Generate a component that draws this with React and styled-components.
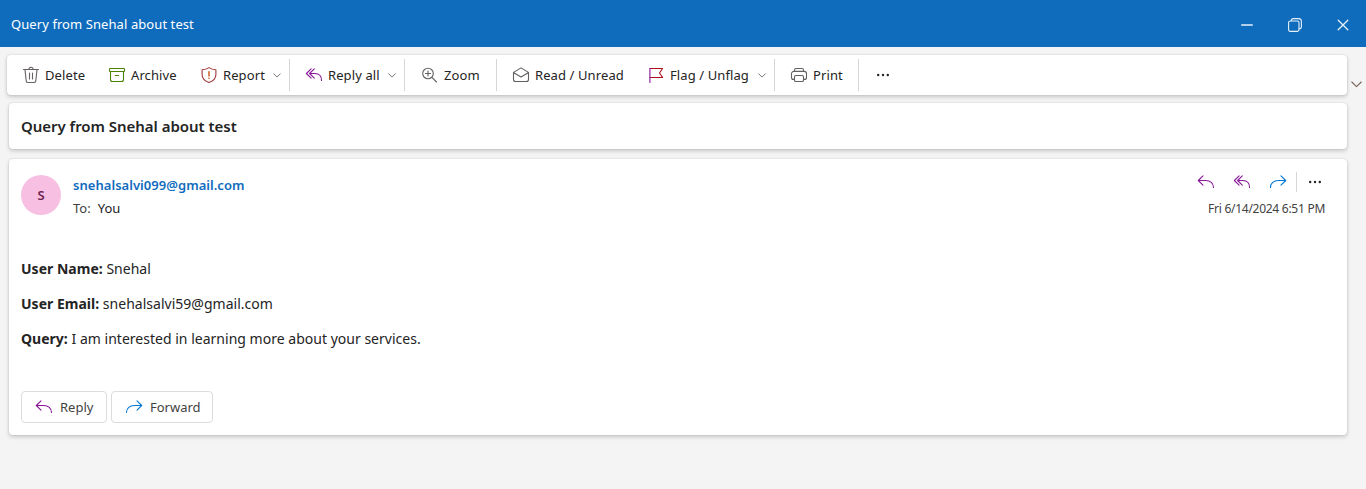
import React from 'react';
import styled, { createGlobalStyle } from 'styled-components';

const GlobalStyle = createGlobalStyle`
  *, *::before, *::after { box-sizing: border-box; }
  body {
    margin: 0;
    background: #f4f4f4;
    color: #242424;
    font-family: "Noto Sans", "Open Sans", sans-serif;
    font-size: 13px;
  }
`;

const Window = styled.div`
  display: flex;
  flex-direction: column;
  height: 489px;
  overflow: hidden;
`;

const TitleBar = styled.header`
  display: flex;
  align-items: center;
  justify-content: space-between;
  height: 47px;
  flex: none;
  padding-left: 11px;
  background: #0f6cbd;
  color: #fff;
`;

const WindowTitle = styled.span`
  letter-spacing: 0.08px;
  line-height: 20px;
`;

const WindowControls = styled.div`
  display: flex;
  height: 100%;
  padding-top: 2px;
`;

const ControlButton = styled.button`
  display: flex;
  align-items: center;
  justify-content: center;
  width: 48px;
  height: 100%;
  padding: 0;
  border: 0;
  background: none;
  color: #e6f0f9;

  &:last-child { width: 47px; }
`;

const Card = styled.section`
  background: #fff;
  border-radius: 4px;
  box-shadow: 0 0 2px rgba(0, 0, 0, 0.14), 0 2px 4px rgba(0, 0, 0, 0.18);
`;

const ToolbarRow = styled.div`
  display: flex;
  padding: 8px 0 0 7px;
`;

const Toolbar = styled(Card).attrs({ as: 'nav' })`
  display: flex;
  align-items: center;
  width: 1340px;
  height: 40px;
  padding-left: 14px;
`;

const RibbonToggle = styled.button`
  display: flex;
  align-items: flex-end;
  justify-content: center;
  width: 19px;
  padding: 0 0 7px;
  border: 0;
  background: none;
  color: #7a625c;
`;

const ToolButton = styled.button`
  display: flex;
  align-items: center;
  width: ${(p) => p.$width}px;
  height: 32px;
  padding: 0;
  border: 0;
  background: none;
  color: inherit;
  font: inherit;
  letter-spacing: 0.1px;
  white-space: nowrap;
`;

const ToolLabel = styled.span`
  flex: 1;
  padding-left: 4px;
  text-align: left;
  line-height: 20px;
`;

const MenuArrow = styled.span`
  display: flex;
  color: #777;
  padding-right: ${(p) => p.$end}px;
`;

const Divider = styled.i`
  width: 1px;
  height: ${(p) => p.$height || 32}px;
  margin-right: ${(p) => p.$gap}px;
  background: #d6d6d6;
`;

const SubjectCard = styled(Card)`
  display: flex;
  align-items: center;
  width: 1338px;
  height: 46px;
  margin: 8px 0 0 9px;
  padding-left: 12px;
`;

const Subject = styled.h1`
  margin: 0;
  font-size: 15px;
  font-weight: 600;
  letter-spacing: -0.03px;
  line-height: 22px;
`;

const MessageCard = styled(Card).attrs({ as: 'article' })`
  display: flex;
  flex-direction: column;
  width: 1338px;
  height: 276px;
  margin: 10px 0 0 9px;
  padding: 12px;
`;

const MessageHeader = styled.header`
  display: flex;
  height: 60px;
`;

const Avatar = styled.div`
  display: flex;
  align-items: center;
  justify-content: center;
  width: 40px;
  height: 40px;
  margin: 4px 12px 0 0;
  border-radius: 50%;
  background: #f7c0e3;
  color: #6b1f4f;
  font-size: 13px;
  font-weight: 600;
`;

const Sender = styled.div`
  flex: 1;
  padding-top: 4px;
`;

const SenderAddress = styled.div`
  color: #0f6cbd;
  font-weight: 600;
  letter-spacing: 0.04px;
  line-height: 20px;
`;

const Recipients = styled.div`
  display: flex;
  gap: 7px;
  margin-top: 3px;
  line-height: 20px;
`;

const RecipientLabel = styled.span`
  color: #424242;
`;

const HeaderAside = styled.div`
  display: flex;
  flex-direction: column;
  align-items: flex-end;
`;

const QuickActions = styled.div`
  display: flex;
  align-items: center;
  height: 22px;
`;

const QuickButton = styled.button`
  display: flex;
  align-items: center;
  width: ${(p) => p.$width}px;
  height: 22px;
  padding: 0;
  border: 0;
  background: none;
  color: inherit;
`;

const SentAt = styled.time`
  padding: 6px 10px 0 0;
  color: #424242;
  font-size: 12px;
  letter-spacing: -0.27px;
  line-height: 20px;
`;

const Body = styled.div`
  flex: 1;
  padding-top: 28px;
  font-size: 14px;
  letter-spacing: 0.015px;
`;

const BodyLine = styled.p`
  margin: 0 0 15px;
  line-height: 20px;
`;

const Actions = styled.footer`
  display: flex;
  gap: 4px;
`;

const ActionButton = styled.button`
  display: flex;
  align-items: center;
  gap: 6px;
  width: ${(p) => p.$width}px;
  height: 32px;
  padding: 0 0 0 12px;
  border: 1px solid #dcdcdc;
  border-radius: 4px;
  background: #fff;
  color: #424242;
  font: inherit;
  line-height: 20px;
`;

const Svg = styled.svg`
  display: block;
  flex: none;
  fill: none;
  stroke: ${(p) => p.$color || 'currentColor'};
  stroke-width: ${(p) => p.$weight || 1.1};
  stroke-linecap: round;
  stroke-linejoin: round;
`;

function Icon({ color, weight, size = 20, children }) {
  return (
    <Svg $color={color} $weight={weight} width={size} height={size} viewBox="0 0 20 20" aria-hidden="true">
      {children}
    </Svg>
  );
}

const TrashIcon = () => (
  <Icon color="#686264">
    <path d="M2.5 4.5h15M7.9 4.3a2.1 2.1 0 0 1 4.2 0M4 4.6l1.2 11.2a2 2 0 0 0 2 1.7h5.6a2 2 0 0 0 2-1.7L16 4.6M8.5 8v6M11.5 8v6" />
  </Icon>
);

const ArchiveIcon = () => (
  <Icon color="#498205">
    <rect x="2.5" y="3.5" width="15" height="3" rx="0.7" />
    <path d="M3.5 6.600v7.900a2 2 0 0 0 2 2h9a2 2 0 0 0 2-2V6.600M8.300 10.500h3.400" />
  </Icon>
);

const ShieldIcon = () => (
  <Icon>
    <path stroke="#a4373a" d="M10 2.6C8.1 4 5.8 4.6 3.1 4.7v4.8c0 3.8 2.3 6.4 6.9 8 4.6-1.6 6.9-4.2 6.9-8V4.7c-2.7-.1-5-.7-6.9-2.1Z" />
    <path stroke="#ca5010" strokeWidth="1.4" d="M10 6.8v4.2M10 13.3v.1" />
  </Icon>
);

const ReplyIcon = () => (
  <Icon color="#881798">
    <path d="M7 3.8 2.3 8.5 7 13.2M2.5 8.5h7.2c4.5 0 7.8 2.8 7.8 7" />
  </Icon>
);

const ReplyAllIcon = () => (
  <Icon color="#881798">
    <path d="M7.1 3.9 2.4 8.5l4.7 4.6M10.3 3.9 5.6 8.5l4.7 4.6M6 8.5h4.7c4.2 0 6.8 2.8 6.8 7" />
  </Icon>
);

const ForwardIcon = () => (
  <Icon color="#0078d4">
    <path d="m13 3.8 4.7 4.7-4.7 4.7M17.5 8.5h-7.2c-4.5 0-7.8 2.8-7.8 7" />
  </Icon>
);

const ZoomIcon = () => (
  <Icon color="#616161">
    <circle cx="8" cy="8.5" r="5.3" />
    <path d="m11.9 12.4 4.6 4.6M8 6v5M5.5 8.5h5" />
  </Icon>
);

const MailReadIcon = () => (
  <Icon color="#616161">
    <path d="M2.5 7.4 10 2.9l7.5 4.5v7.1a2 2 0 0 1-2 2h-11a2 2 0 0 1-2-2ZM2.8 7.7 10 12l7.2-4.3" />
  </Icon>
);

const FlagIcon = () => (
  <Icon>
    <path stroke="#b10e1c" d="M4 3.5h12.6L13.5 8l3.1 4.5H4" />
    <path stroke="#881798" d="M3.9 3.5v14" />
  </Icon>
);

const PrintIcon = () => (
  <Icon color="#616161">
    <path d="M5.5 6.3V5A1.5 1.5 0 0 1 7 3.5h6A1.5 1.5 0 0 1 14.5 5v1.3M5.5 14.4h-1a2 2 0 0 1-2-2V8.7a2.3 2.3 0 0 1 2.3-2.3h10.4a2.3 2.3 0 0 1 2.3 2.3v3.7a2 2 0 0 1-2 2h-1" />
    <rect x="5.5" y="10.5" width="9" height="6" rx="1.3" />
  </Icon>
);

const DotsIcon = () => (
  <Svg width="14" height="4" viewBox="0 0 14 4" aria-hidden="true">
    <g fill="#242424" stroke="none">
      <circle cx="2.2" cy="2" r="1.2" />
      <circle cx="7" cy="2" r="1.2" />
      <circle cx="11.8" cy="2" r="1.2" />
    </g>
  </Svg>
);

const ChevronIcon = ({ width = 8 }) => (
  <Svg $weight={1} width={width} height={width / 2 + 1} viewBox="0 0 8 5" aria-hidden="true">
    <path d="M.7.8 4 4.1 7.3.8" />
  </Svg>
);

const RibbonChevron = () => (
  <Svg $weight={1.1} width="11" height="7" viewBox="0 0 11 7" aria-hidden="true">
    <path d="m.8 1 4.7 4.6L10.2 1" />
  </Svg>
);

function Tool({ icon, label, width, menuEnd }) {
  return (
    <ToolButton $width={width}>
      {icon}
      <ToolLabel>{label}</ToolLabel>
      {menuEnd !== undefined && (
        <MenuArrow $end={menuEnd}><ChevronIcon /></MenuArrow>
      )}
    </ToolButton>
  );
}

export default function App() {
  return (
    <>
      <GlobalStyle />
      <Window>
        <TitleBar>
          <WindowTitle>Query from Snehal about test</WindowTitle>
          <WindowControls>
            <ControlButton aria-label="Minimize">
              <Svg $weight={1.4} width="12" height="12" viewBox="0 0 12 12"><path d="M.7 6h10.6" /></Svg>
            </ControlButton>
            <ControlButton aria-label="Restore">
              <Svg width="14" height="14" viewBox="0 0 14 14">
                <rect x=".6" y="3" width="10.4" height="10.4" rx="1.6" />
                <path d="M3.2 2.8A2.2 2.2 0 0 1 5.2.6h5.3a2.9 2.9 0 0 1 2.9 2.9v5.3a2.2 2.2 0 0 1-2.2 2.1" />
              </Svg>
            </ControlButton>
            <ControlButton aria-label="Close">
              <Svg $weight={1.3} width="12" height="12" viewBox="0 0 12 12"><path d="m1.200 1.200 9.600 9.600M10.800 1.200l-9.600 9.600" /></Svg>
            </ControlButton>
          </WindowControls>
        </TitleBar>

        <ToolbarRow>
          <Toolbar>
            <Tool icon={<TrashIcon />} label="Delete" width={86} />
            <Tool icon={<ArchiveIcon />} label="Archive" width={92} />
            <Tool icon={<ShieldIcon />} label="Report" width={90} menuEnd={8} />
            <Divider $gap={14} />
            <Tool icon={<ReplyAllIcon />} label="Reply all" width={100} menuEnd={8} />
            <Divider $gap={15} />
            <Tool icon={<ZoomIcon />} label="Zoom" width={76} />
            <Divider $gap={14} />
            <Tool icon={<MailReadIcon />} label="Read / Unread" width={135} />
            <Tool icon={<FlagIcon />} label="Flag / Unflag" width={128} menuEnd={8} />
            <Divider $gap={14} />
            <Tool icon={<PrintIcon />} label="Print" width={69} />
            <Divider $gap={17} />
            <ToolButton $width={20} aria-label="More"><DotsIcon /></ToolButton>
          </Toolbar>
          <RibbonToggle aria-label="Ribbon options"><RibbonChevron /></RibbonToggle>
        </ToolbarRow>

        <SubjectCard>
          <Subject>Query from Snehal about test</Subject>
        </SubjectCard>

        <MessageCard>
          <MessageHeader>
            <Avatar>S</Avatar>
            <Sender>
              <SenderAddress>snehalsalvi099@gmail.com</SenderAddress>
              <Recipients>
                <RecipientLabel>To:</RecipientLabel>
                <span>You</span>
              </Recipients>
            </Sender>
            <HeaderAside>
              <QuickActions>
                <QuickButton $width={36} aria-label="Reply"><ReplyIcon /></QuickButton>
                <QuickButton $width={36} aria-label="Reply all"><ReplyAllIcon /></QuickButton>
                <QuickButton $width={28} aria-label="Forward"><ForwardIcon /></QuickButton>
                <Divider $height={20} $gap={11} />
                <QuickButton $width={27} aria-label="More"><DotsIcon /></QuickButton>
              </QuickActions>
              <SentAt>Fri 6/14/2024 6:51 PM</SentAt>
            </HeaderAside>
          </MessageHeader>

          <Body>
            <BodyLine><b>User Name:</b> Snehal</BodyLine>
            <BodyLine><b>User Email:</b> snehalsalvi59@gmail.com</BodyLine>
            <BodyLine><b>Query:</b> I am interested in learning more about your services.</BodyLine>
          </Body>

          <Actions>
            <ActionButton $width={86}><ReplyIcon />Reply</ActionButton>
            <ActionButton $width={102}><ForwardIcon />Forward</ActionButton>
          </Actions>
        </MessageCard>
      </Window>
    </>
  );
}
